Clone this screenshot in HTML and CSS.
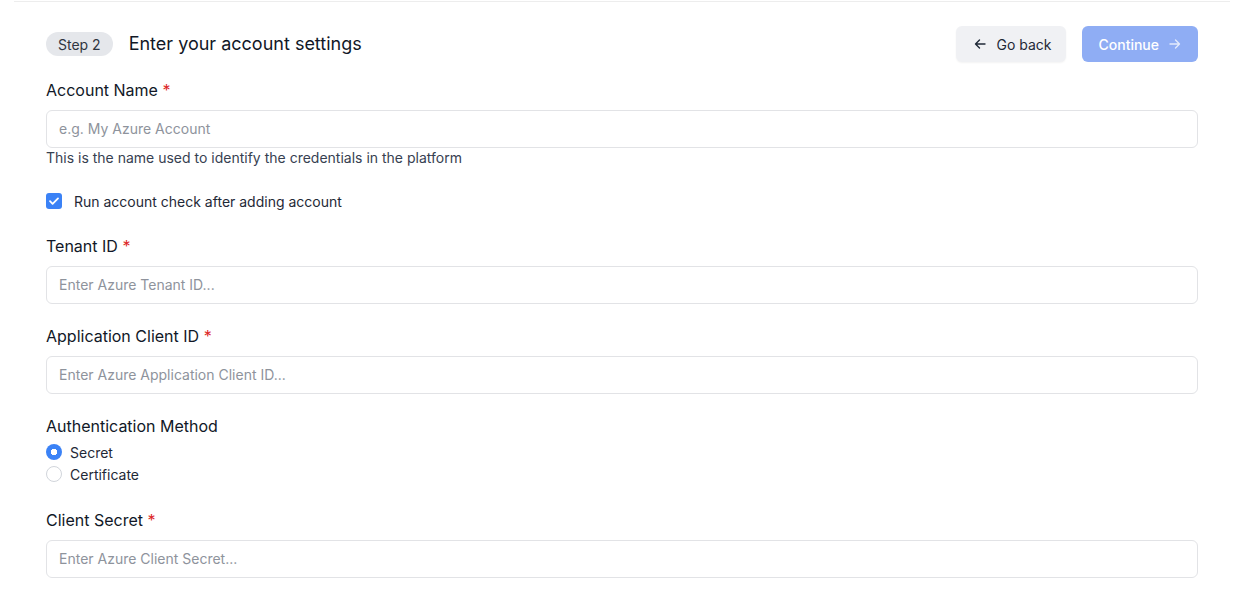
FILE: index.html
```html
<!DOCTYPE html>
<html lang="en">
<head>
<meta charset="utf-8">
<title>Enter your account settings</title>
<link rel="stylesheet" href="styles.css">
</head>
<body>
<div class="topline"></div>
<main class="page">
  <header class="head">
    <div class="head-left">
      <span class="step">Step 2</span>
      <h1 class="title">Enter your account settings</h1>
    </div>
    <div class="head-actions">
      <button class="btn btn-back" type="button">
        <svg class="ico" viewBox="0 0 16 16" width="16" height="16" fill="none" stroke="currentColor" stroke-width="1.4" stroke-linecap="round" stroke-linejoin="round"><path d="M13 8H3.5M7.5 4L3.5 8l4 4"/></svg>
        <span>Go back</span>
      </button>
      <button class="btn btn-continue" type="button">
        <span>Continue</span>
        <svg class="ico" viewBox="0 0 16 16" width="16" height="16" fill="none" stroke="currentColor" stroke-width="1.4" stroke-linecap="round" stroke-linejoin="round"><path d="M3 8h9.5M8.5 4l4 4-4 4"/></svg>
      </button>
    </div>
  </header>

  <section class="field">
    <label class="label">Account Name <span class="req">*</span></label>
    <input class="input" type="text" placeholder="e.g. My Azure Account">
    <p class="help">This is the name used to identify the credentials in the platform</p>
  </section>

  <label class="check">
    <span class="checkbox">
      <svg viewBox="0 0 16 16" width="16" height="16" fill="none" stroke="#fff" stroke-width="1.8" stroke-linecap="round" stroke-linejoin="round"><path d="M4 8.2l2.6 2.6L12 5.4"/></svg>
    </span>
    <span>Run account check after adding account</span>
  </label>

  <section class="field field-tenant">
    <label class="label">Tenant ID <span class="req">*</span></label>
    <input class="input" type="text" placeholder="Enter Azure Tenant ID...">
  </section>

  <section class="field field-gap">
    <label class="label">Application Client ID <span class="req">*</span></label>
    <input class="input" type="text" placeholder="Enter Azure Application Client ID...">
  </section>

  <section class="field field-gap">
    <span class="label">Authentication Method</span>
    <div class="radios">
      <label class="radio"><span class="dot dot-on"></span><span>Secret</span></label>
      <label class="radio"><span class="dot"></span><span>Certificate</span></label>
    </div>
  </section>

  <section class="field field-secret">
    <label class="label">Client Secret <span class="req">*</span></label>
    <input class="input" type="text" placeholder="Enter Azure Client Secret...">
  </section>
</main>
</body>
</html>
```

FILE: styles.css
```css
* { box-sizing: border-box; }

html, body {
  margin: 0;
  padding: 0;
  background: #ffffff;
}

body {
  font-family: Inter, "Noto Sans", "Liberation Sans", sans-serif;
  color: #111827;
  -webkit-font-smoothing: antialiased;
}

.topline {
  height: 1px;
  margin: 1px 15px 0 14px;
  background: #ededed;
}

.page {
  padding: 0 47px 0 46px;
  display: flex;
  flex-direction: column;
}

.head {
  display: flex;
  align-items: center;
  justify-content: space-between;
  margin-top: 24px;
  height: 36px;
}

.head-left {
  display: flex;
  align-items: center;
  gap: 16px;
}

.step {
  display: inline-flex;
  align-items: center;
  height: 24px;
  padding: 0 12px;
  border-radius: 999px;
  background: #e5e7eb;
  color: #2f3541;
  font-size: 14px;
}

.title {
  margin: 0;
  font-size: 18px;
  font-weight: 400;
  color: #111827;
  line-height: 28px;
}

.head-actions {
  display: flex;
  gap: 16px;
}

.btn {
  display: inline-flex;
  align-items: center;
  gap: 8px;
  height: 36px;
  border: 0;
  border-radius: 6px;
  font-family: inherit;
  font-size: 14px;
  font-weight: 400;
  cursor: pointer;
}

.btn-back {
  padding: 0 15px 0 16px;
  background: #f0f1f4;
  color: #1f2937;
  box-shadow: 0 1px 2px rgba(0, 0, 0, 0.05);
}

.btn-continue {
  padding: 0 15px 0 16px;
  background: #8fadf4;
  color: #ffffff;
  font-weight: 500;
}

.btn-continue .ico { opacity: 0.75; }

.field {
  display: flex;
  flex-direction: column;
  margin-top: 16px;
}

.field-tenant { margin-top: 23px; }
.field-gap { margin-top: 20px; }
.field-secret { margin-top: 24px; }

.label {
  font-size: 16px;
  line-height: 24px;
  color: #111827;
  margin-bottom: 8px;
}

.req { color: #dc2626; }

.input {
  height: 38px;
  width: 100%;
  border: 1px solid #e2e3e6;
  border-radius: 6px;
  padding: 0 12px 1px;
  font-family: inherit;
  font-size: 14px;
  color: #111827;
  background: #fff;
  outline: none;
}

.input::placeholder { color: #8e939c; }

.help {
  margin: 0;
  font-size: 14px;
  line-height: 20px;
  color: #374151;
}

.check {
  display: flex;
  align-items: center;
  gap: 12px;
  margin-top: 23px;
  height: 20px;
  font-size: 14px;
  color: #1f2937;
}

.checkbox {
  width: 16px;
  height: 16px;
  border-radius: 3px;
  background: #3b82f6;
  display: inline-flex;
}

.radios {
  display: flex;
  flex-direction: column;
  gap: 2px;
  margin-top: -4px;
}

.radio {
  display: flex;
  align-items: center;
  gap: 8px;
  height: 20px;
  font-size: 14px;
  color: #1f2937;
}

.dot {
  width: 16px;
  height: 16px;
  border-radius: 50%;
  border: 1px solid #d1d5db;
  background: #fff;
}

.dot-on {
  border: 0;
  background: radial-gradient(circle, #ffffff 0 3px, #3b82f6 3.5px);
}
```
